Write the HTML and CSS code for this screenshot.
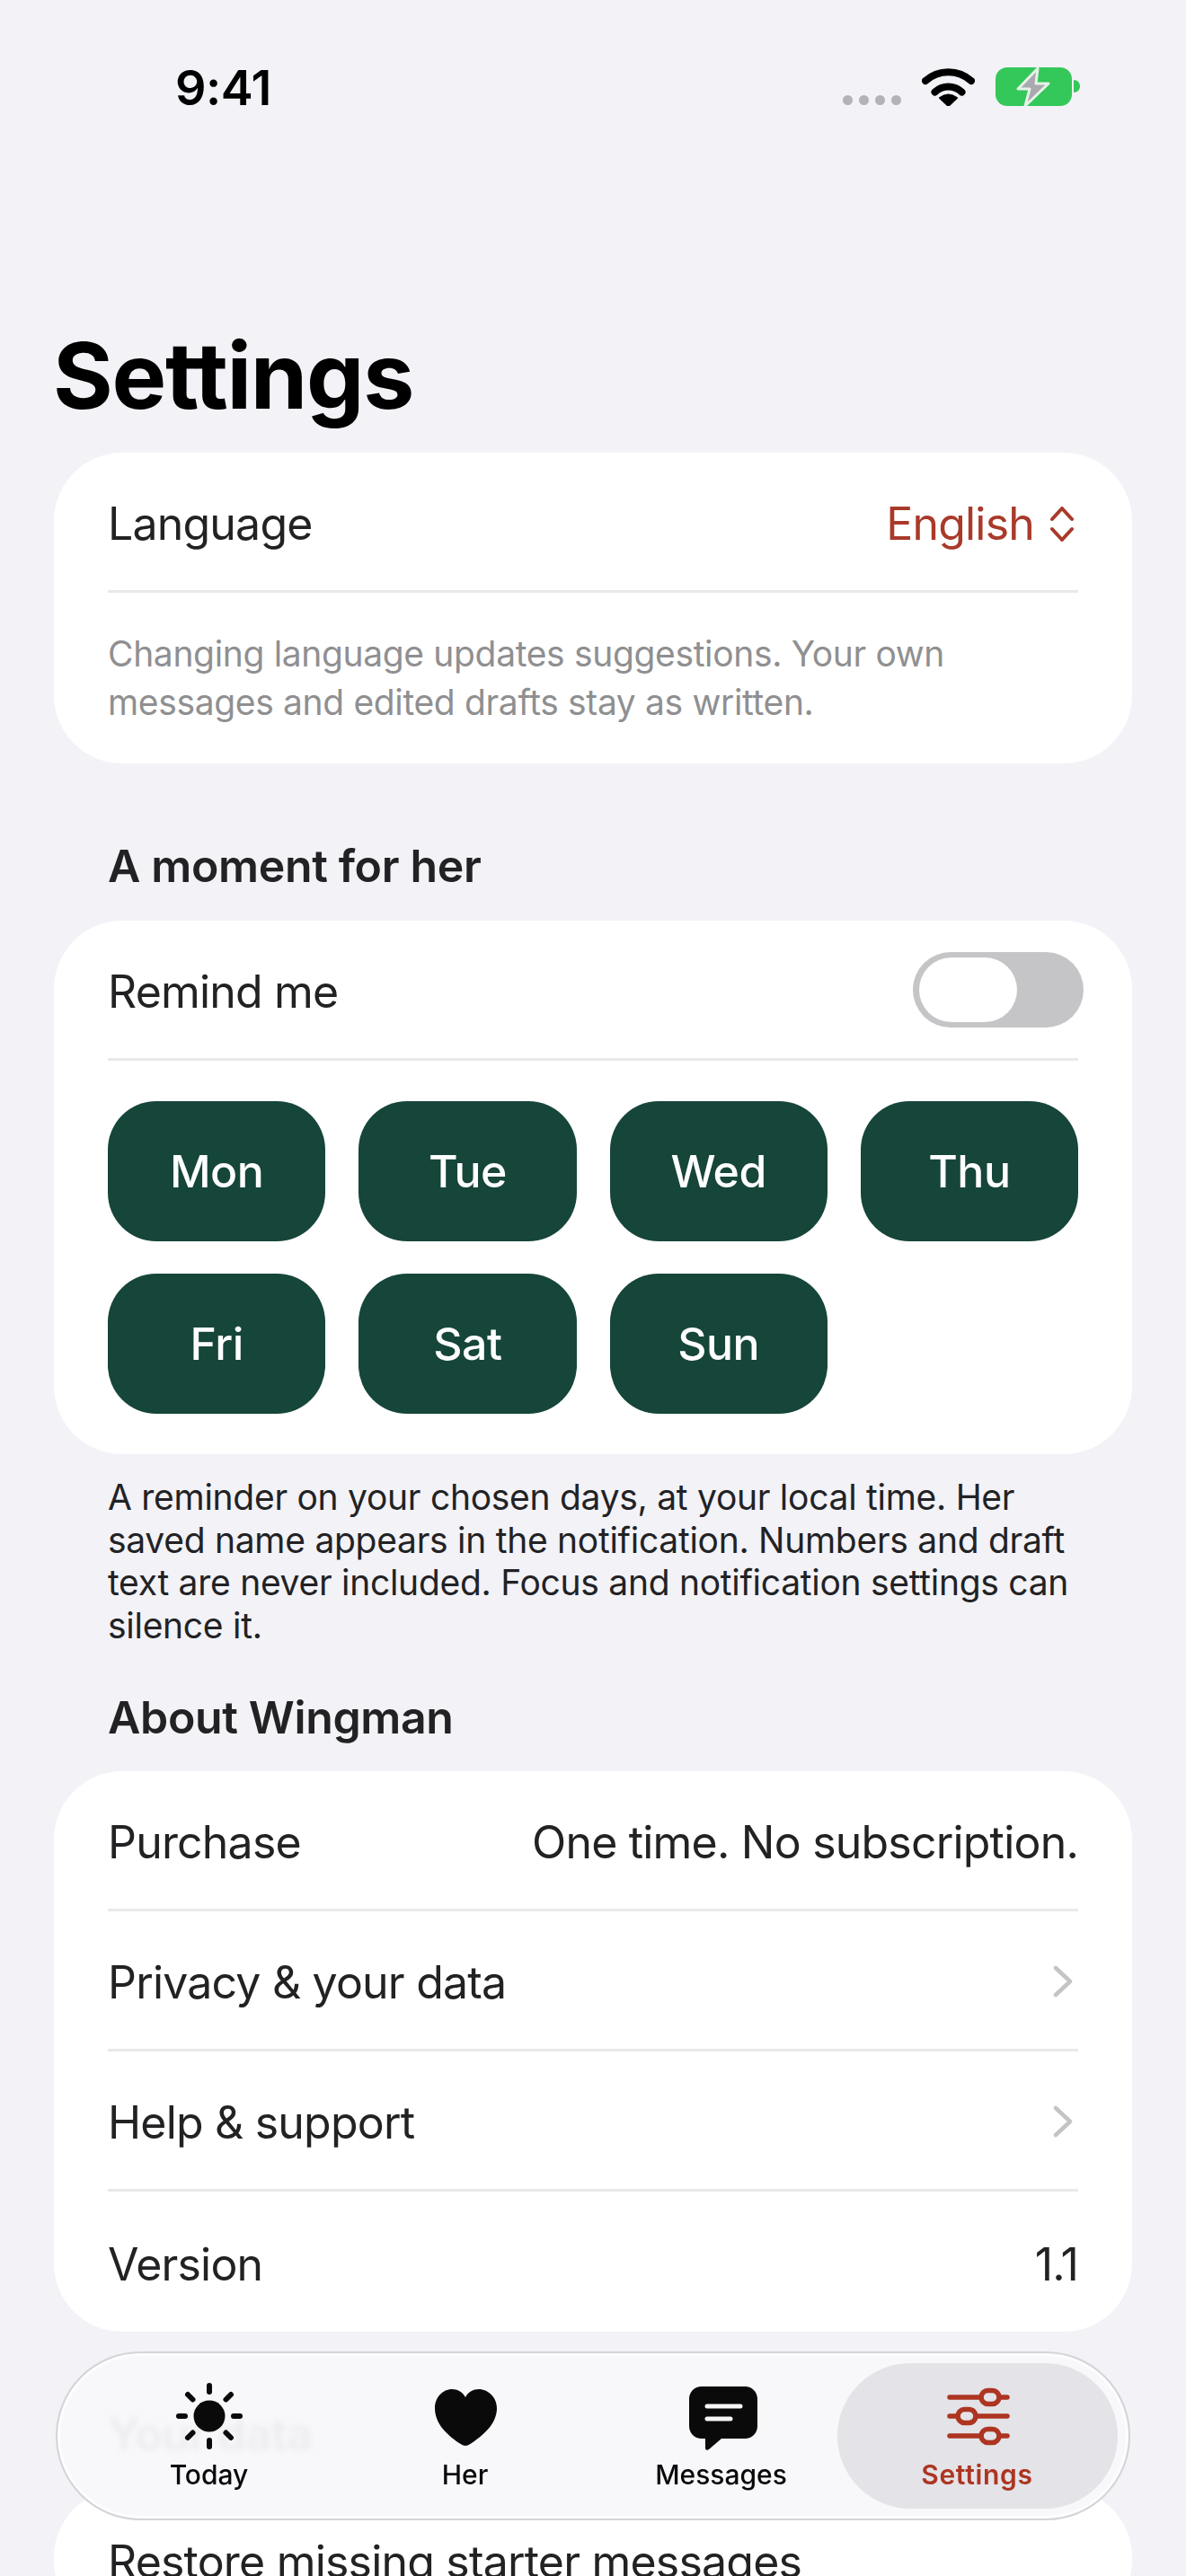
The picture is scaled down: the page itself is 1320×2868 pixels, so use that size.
FILE: index.html
```html
<!DOCTYPE html>
<html lang="en">
<head>
<meta charset="utf-8">
<title>Settings</title>
<link rel="stylesheet" href="styles.css">
</head>
<body>
<div class="screen">
  <header class="status">
    <span class="time">9:41</span>
    <div class="status-icons">
      <div class="dots"><i></i><i></i><i></i><i></i></div>
      <svg class="wifi" width="59" height="43" viewBox="0 0 59 43"><path d="M4 15A38 38 0 0 1 55 15M14.5 27.500A22 22 0 0 1 44.500 27.500" fill="none" stroke="#000" stroke-width="8" stroke-linecap="round"/><path d="M29.500 43L20 34Q29.500 27 39 34Z" fill="#000" stroke="#000" stroke-width="2" stroke-linejoin="round"/></svg>
      <svg class="battery" width="94" height="46" viewBox="0 0 94 46"><rect x="0" y="1" width="85" height="43" rx="13" fill="#34c759"/><path d="M87 15C91 15 94 18 94 22S91 29 87 29Z" fill="#34c759"/><path d="M47 2L25 25H38L33 44L59 19H45Z" fill="#a9a9ae" stroke="#e6f3e8" stroke-width="3" stroke-linejoin="round"/></svg>
    </div>
  </header>

  <h1 class="title">Settings</h1>

  <section class="card">
    <div class="row">
      <span>Language</span>
      <span class="picker">English
        <svg width="26" height="39" viewBox="0 0 26 39"><path d="M2 14L13 2L24 14M2 25L13 37L24 25" fill="none" stroke="#a93a2a" stroke-width="4" stroke-linecap="round" stroke-linejoin="round"/></svg>
      </span>
    </div>
    <p class="note">Changing language updates suggestions. Your own messages and edited drafts stay as written.</p>
  </section>

  <h2 class="heading">A moment for her</h2>
  <section class="card">
    <div class="row">
      <span>Remind me</span>
      <div class="toggle"><div class="knob"></div></div>
    </div>
    <div class="days">
      <div class="day">Mon</div>
      <div class="day">Tue</div>
      <div class="day">Wed</div>
      <div class="day">Thu</div>
      <div class="day">Fri</div>
      <div class="day">Sat</div>
      <div class="day">Sun</div>
    </div>
  </section>
  <p class="foot">A reminder on your chosen days, at your local time. Her saved name appears in the notification. Numbers and draft text are never included. Focus and notification settings can silence it.</p>

  <h2 class="heading heading-tight">About Wingman</h2>
  <section class="card">
    <div class="row"><span>Purchase</span><span>One time. No subscription.</span></div>
    <div class="row"><span>Privacy &amp; your data</span>
      <svg class="chev" width="22" height="36" viewBox="0 0 22 36"><path d="M3 3L19 18L3 33" fill="none" stroke="#c4c4c6" stroke-width="4.500" stroke-linecap="round" stroke-linejoin="round"/></svg></div>
    <div class="row"><span>Help &amp; support</span>
      <svg class="chev" width="22" height="36" viewBox="0 0 22 36"><path d="M3 3L19 18L3 33" fill="none" stroke="#c4c4c6" stroke-width="4.500" stroke-linecap="round" stroke-linejoin="round"/></svg></div>
    <div class="row row-last"><span>Version</span><span>1.1</span></div>
  </section>

  <h2 class="heading">Your data</h2>
  <section class="card">
    <div class="row"><span>Restore missing starter messages</span></div>
  </section>

  <nav class="tabbar">
    <div class="tab">
      <svg width="90" height="80" viewBox="0 0 90 80"><circle cx="45" cy="40" r="17.500" fill="#0a0a0a"/><path d="M45 6V13M45 67V74M11 40H18M72 40H79M21 16L26.500 21.500M69 16L63.500 21.500M21 64L26.500 58.500M69 64L63.500 58.500" stroke="#0a0a0a" stroke-width="6" stroke-linecap="round"/></svg>
      <span class="tab-label">Today</span>
    </div>
    <div class="tab">
      <svg width="90" height="80" viewBox="0 0 90 80"><path d="M45 73C43 73 41 72 38 70C22 59 11 47 11 31C11 19 20 10 30 10C36 10 42 13 45 19C48 13 54 10 60 10C70 10 80 19 80 31C80 47 68 59 52 70C49 72 47 73 45 73Z" fill="#0a0a0a"/></svg>
      <span class="tab-label">Her</span>
    </div>
    <div class="tab">
      <svg width="90" height="80" viewBox="0 0 90 80"><path d="M23 7H71C79 7 85 13 85 21V51C85 59 79 65 71 65H45L31 77C29 78.500 27 78 27 75V65H23C15 65 9 59 9 51V21C9 13 15 7 23 7Z" fill="#0a0a0a"/><path d="M29 29H66M29 43H55" stroke="#f6f6f8" stroke-width="5" stroke-linecap="round"/></svg>
      <span class="tab-label">Messages</span>
    </div>
    <div class="tab tab-active">
      <svg width="90" height="80" viewBox="0 0 90 80"><g fill="none" stroke="#ad3521" stroke-width="5.500" stroke-linecap="round"><path d="M14 19H49M69 19H78M14 40H23M43 40H78M14 62H49M69 62H78"/><rect x="49" y="11.500" width="20" height="15" rx="7.500"/><rect x="23" y="32.500" width="20" height="15" rx="7.500"/><rect x="49" y="54.500" width="20" height="15" rx="7.500"/></g></svg>
      <span class="tab-label">Settings</span>
    </div>
  </nav>
</div>
</body>
</html>
```
FILE: styles.css
```css
* { box-sizing: border-box; }
html, body { margin: 0; padding: 0; }
body { background: #f2f2f7; font-family: Inter, "Liberation Sans", sans-serif; color: #222224; }
.screen { position: relative; width: 1320px; height: 2868px; overflow: hidden; background: #f2f2f7; }

.status { display: flex; justify-content: space-between; align-items: center; height: 194px; padding: 0 118px 0 195px; }
.time { font-size: 54px; font-weight: 600; color: #000; letter-spacing: -0.5px; }
.status-icons { display: flex; align-items: center; }
.dots { display: flex; gap: 7px; margin-right: 23px; padding-top: 28px; }
.dots i { display: block; width: 11px; height: 11px; border-radius: 50%; background: #b2b2b7; }
.wifi { margin-right: 23px; margin-top: -2px; }

.title { margin: 0; padding: 164px 0 2px 59px; font-size: 102px; line-height: 120px; font-weight: 700; color: #000; letter-spacing: -1.3px; }

.card { margin: 24px 60px 0; padding: 0 60px; background: #fff; border-radius: 76px; }
.row { display: flex; justify-content: space-between; align-items: center; height: 156px; padding-top: 5px; border-bottom: 3px solid #e9e9ea; font-size: 50px; letter-spacing: -0.8px; color: #222224; }
.row-last, .card > .row:only-child { border-bottom: 0; }
.picker { display: flex; align-items: center; gap: 18px; color: #a93a2a; padding-right: 5px; }
.chev { margin-right: 6px; margin-top: -2px; }
.note { margin: 0; padding: 41px 0 41px; font-size: 39px; line-height: 54px; letter-spacing: -0.35px; color: #8f8f91; }

.heading { margin: 85px 0 32px; padding-left: 120px; font-size: 50px; line-height: 58px; font-weight: 600; letter-spacing: -0.35px; color: #222224; }
.heading + .card { margin-top: 0; }
.heading-tight { margin-top: 50px; margin-bottom: 31px; }

.toggle { width: 190px; height: 84px; padding: 6px 7px; border-radius: 42px; background: #c5c5c7; margin-right: -6px; margin-top: -5px; }
.knob { width: 109px; height: 72px; border-radius: 36px; background: #fff; }

.days { display: grid; grid-template-columns: repeat(4, 1fr); grid-auto-rows: 156px; gap: 36px 37px; padding: 45px 0; }
.day { display: flex; align-items: center; justify-content: center; border-radius: 54px; background: #16453a; color: #fff; font-size: 50px; font-weight: 550; letter-spacing: -0.5px; }

.foot { margin: 24px 0 0; padding: 0 120px; font-size: 39px; line-height: 47.600px; letter-spacing: -0.28px; color: #222224; }

.tabbar { position: absolute; left: 62px; top: 2618px; width: 1196px; height: 188px; display: flex; padding: 11px 0 0 26px; border: 2px solid #d4d4d8; border-radius: 94px; background: rgba(248, 248, 251, 0.95); backdrop-filter: blur(3px); box-shadow: inset 0 0 0 3px rgba(255, 255, 255, 0.7); }
.tab { position: relative; width: 285px; height: 162px; display: flex; flex-direction: column; align-items: center; padding-top: 19px; }
.tab svg, .tab-label { position: relative; }
.tab-label { margin-top: 7px; font-size: 30px; line-height: 36px; font-weight: 500; color: #0a0a0a; }
.tab-active::before { content: ""; position: absolute; left: -13px; right: -14px; top: 0; bottom: 0; border-radius: 81px; background: #e3e3e8; }
.tab-active .tab-label { color: #ad3521; font-weight: 600; letter-spacing: 0.7px; }
```
